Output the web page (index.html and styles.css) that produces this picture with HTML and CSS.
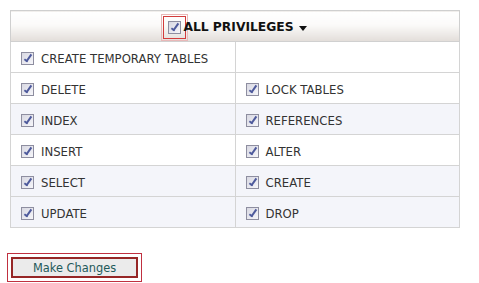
FILE: index.html
```html
<!DOCTYPE html>
<html lang="en">
<head>
    <meta charset="UTF-8">
    <title>Privileges</title>
    <link rel="stylesheet" href="styles.css">
</head>
<body>
    <table class="priv-table">
        <thead>
            <tr>
                <th colspan="2">
                    <div class="head-inner">
                        <span class="all-box"><span class="check"></span></span>
                        <span>ALL PRIVILEGES</span>
                        <span class="caret"></span>
                    </div>
                </th>
            </tr>
        </thead>
        <tbody>
            <tr>
                <td><span class="check"></span>CREATE TEMPORARY TABLES</td>
                <td></td>
            </tr>
            <tr>
                <td><span class="check"></span>DELETE</td>
                <td><span class="check"></span>LOCK TABLES</td>
            </tr>
            <tr class="alt">
                <td><span class="check"></span>INDEX</td>
                <td><span class="check"></span>REFERENCES</td>
            </tr>
            <tr>
                <td><span class="check"></span>INSERT</td>
                <td><span class="check"></span>ALTER</td>
            </tr>
            <tr class="alt">
                <td><span class="check"></span>SELECT</td>
                <td><span class="check"></span>CREATE</td>
            </tr>
            <tr class="alt">
                <td><span class="check"></span>UPDATE</td>
                <td><span class="check"></span>DROP</td>
            </tr>
        </tbody>
    </table>
    <div class="actions">
        <span class="btn-focus"><button type="submit">Make Changes</button></span>
    </div>
</body>
</html>
```

FILE: styles.css
```css
body {
    margin: 0;
    padding: 10px 0 0 10px;
    background: #fff;
    font-family: "DejaVu Sans", Verdana, sans-serif;
    font-size: 11.7px;
    color: #333;
}
.priv-table {
    width: 450px;
    border-collapse: collapse;
    border: 1px solid #cfcfcf;
}
.priv-table th {
    padding: 0;
    background: linear-gradient(to bottom, #ffffff 0%, #fbfaf9 45%, #e2ddd9 100%);
    font-size: 12.3px;
    font-weight: bold;
    color: #111;
    border-bottom: 1px solid #d0d0d0;
}
.head-inner {
    display: flex;
    align-items: center;
    justify-content: center;
    height: 30px;
    padding-top: 2px;
    box-sizing: border-box;
}
.priv-table td {
    width: 50%;
    height: 26px;
    padding: 4px 0 0 10px;
    border: 1px solid #d4d4d4;
    background: #fff;
    vertical-align: middle;
}
.priv-table tr.alt td {
    background: #f4f5fa;
}
.check {
    display: inline-block;
    width: 11px;
    height: 11px;
    margin-right: 7px;
    vertical-align: -2px;
    border: 1px solid #8e8ea0;
    background: linear-gradient(135deg, #d8d8e2, #f6f6fa);
    position: relative;
}
.check::after {
    content: "";
    position: absolute;
    left: 4px;
    top: 0;
    width: 2px;
    height: 7px;
    border: solid #4e5a9c;
    border-width: 0 2px 2px 0;
    transform: rotate(35deg);
}
.all-box {
    display: inline-block;
    padding: 4px;
    border: 1px solid #d33c3c;
    outline: 1px solid #e9b8b8;
    outline-offset: 1px;
    margin-right: -3px;
    margin-top: 1px;
}
.all-box .check {
    display: block;
    margin: 0;
}
.caret {
    display: inline-block;
    width: 0;
    height: 0;
    margin-left: 5px;
    margin-top: 2px;
    border-left: 4px solid transparent;
    border-right: 4px solid transparent;
    border-top: 5px solid #111;
}
.actions {
    margin-top: 25px;
    margin-left: -3px;
}
.btn-focus {
    display: inline-block;
    padding: 3px;
    border: 1px solid #c03040;
}
button {
    display: block;
    width: 127px;
    height: 21px;
    border: 2px solid #962626;
    background: #ebebeb;
    color: #1f5a5a;
    font-family: "DejaVu Sans", Verdana, sans-serif;
    font-size: 11.4px;
    padding: 0;
    cursor: pointer;
}
```
